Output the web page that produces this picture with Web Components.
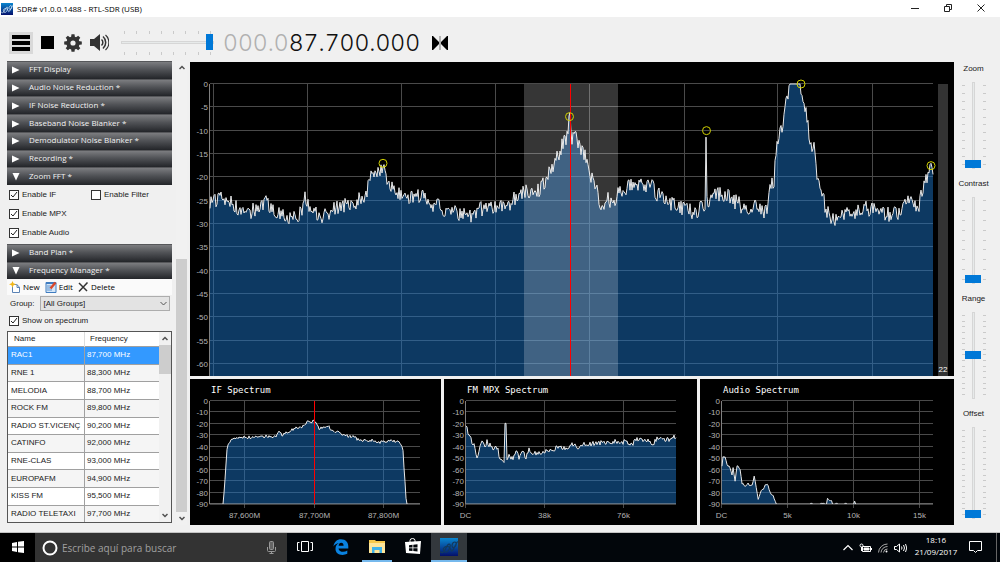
<!DOCTYPE html>
<html lang="es">
<head>
<meta charset="utf-8">
<title>SDR# v1.0.0.1488 - RTL-SDR (USB)</title>
<style>
  html, body {
      height: 100%;
      margin: 0;
  }

  body {
      overflow: hidden;
      background-color: #f0f0f0;
      color: #1a1a1a;
      font-family: 'Liberation Sans', Arial, sans-serif;
      font-size: 8px;
      line-height: 10px;
      --ui-font: 'Open Sans', 'Noto Sans', sans-serif;
      --accent: #0078d7;
  }
</style>
</head>
<body>
<sdr-app></sdr-app>

<script>
/**
 * Shorthand for building a template from a string.
 */
function makeTemplate (html) {
  const template = document.createElement('template')
  template.innerHTML = html
  return template
}

/**
 * Base class, attaches the shadow root and appends the template.
 */
class SdrElement extends HTMLElement {
  constructor () {
    super()
    this.attachShadow({ mode: 'open' })
      .appendChild(this.constructor.template.content.cloneNode(true))
  }

  $ (selector) {
    return this.shadowRoot.querySelector(selector)
  }
}

// The SDR# logo, used in the title bar and in the task bar.
customElements.define('sdr-logo', class extends SdrElement {
  static template = makeTemplate(`
    <style>
    :host { display: block; width: 12px; height: 12px; }
    svg { display: block; width: 100%; height: 100%; }
    </style>
    <svg viewBox="0 0 18 18">
      <defs>
        <linearGradient id="g" x1="0" y1="0" x2="0" y2="1">
          <stop offset="0" stop-color="#0a86cf"/>
          <stop offset="1" stop-color="#04106b"/>
        </linearGradient>
      </defs>
      <rect width="18" height="18" fill="url(#g)"/>
      <path d="M0 13 C2 16 4 15 6 10 C8 5 11 5 10 9 C9 13 6 16 4 13 C2 10 6 7 9 9 C12 11 10 15 13 12 C15 9 17 3 18 4 M12 7 C13 3 17 3 16 7 C15 10 12 11 12 7"
        fill="none" stroke="var(--logo-line, #cfe6f5)" stroke-width="1.2"/>
    </svg>
  `)
})

customElements.define('title-bar', class extends SdrElement {
  static template = makeTemplate(`
    <style>
    :host {
        display: flex;
        align-items: center;
        height: 17px;
        padding: 0 3px 0 1px;
        background-color: #fff;
        color: #000;
        font: 8px/17px var(--ui-font);
    }
    .name { flex: 1; padding-left: 4px; }
    button {
        display: grid;
        place-items: center;
        width: 33px;
        height: 17px;
        padding: 0 0 2px;
        border: 0;
        background: none;
    }
    svg { fill: none; stroke: #222; }
    </style>
    <sdr-logo></sdr-logo>
    <span class="name"><slot></slot></span>
    <button type="button" aria-label="Minimize"><svg width="8" height="8"><path d="M0 4.5h8"/></svg></button>
    <button type="button" aria-label="Restore"><svg width="8" height="8"><path d="M.5 2.5h5v5h-5zM2.5 2V.5h5v5H6"/></svg></button>
    <button type="button" aria-label="Close"><svg width="8" height="8"><path d="M.5.5l7 7M7.5.5l-7 7"/></svg></button>
  `)
})

/**
 * Slider with tick marks on both sides, horizontal or vertical.
 */
customElements.define('tick-slider', class extends SdrElement {
  static template = makeTemplate(`
    <style>
    :host { display: flex; flex-direction: column; width: 93px; }
    .ticks { display: flex; justify-content: space-between; height: 3px; padding: 0 3px; }
    .ticks i { width: 1px; background-color: #cacaca; }
    input {
        appearance: none;
        width: 100%;
        height: 18px;
        margin: 0;
        background: none;
    }
    input::-webkit-slider-runnable-track {
        height: 3px;
        border: 1px solid #d6d6d6;
        box-sizing: border-box;
        background-color: #e7eaea;
    }
    input::-webkit-slider-thumb {
        appearance: none;
        width: 7px;
        height: 16px;
        margin-top: -8px;
        background-color: var(--accent);
    }

    :host([vertical]) {
        flex-direction: row;
        justify-content: center;
        width: auto;
        height: 87px;
    }
    :host([vertical]) .ticks {
        flex-direction: column;
        width: 3px;
        height: auto;
        padding: 3px 0 4px;
    }
    :host([vertical]) .ticks i { width: 3px; height: 1px; }
    :host([vertical]) input {
        writing-mode: vertical-lr;
        direction: rtl;
        width: 18px;
        height: 100%;
    }
    :host([vertical]) input::-webkit-slider-runnable-track { width: 3px; height: 100%; }
    :host([vertical]) input::-webkit-slider-thumb {
        width: 16px;
        height: 8px;
        margin: 0 0 0 -8px;
    }
    </style>
    <div class="ticks"></div>
    <input type="range" min="0" max="100">
    <div class="ticks"></div>
  `)

  connectedCallback () {
    const input = this.$('input')
    input.value = this.getAttribute('value')
    input.setAttribute('aria-label', this.getAttribute('label'))
    this.shadowRoot.querySelectorAll('.ticks').forEach(ticks => {
      ticks.innerHTML = '<i></i>'.repeat(Number(this.getAttribute('ticks')))
    })
  }
})

customElements.define('tool-bar', class extends SdrElement {
  static template = makeTemplate(`
    <style>
    :host { display: flex; align-items: center; box-sizing: border-box; height: 44px; padding: 7px 0 0 9px; }
    button {
        display: grid;
        place-items: center;
        width: 26px;
        height: 22px;
        padding: 0;
        border: 0;
        background: none;
    }
    .menu { width: 24px; background-color: #d9d9d9; }
    .menu + button { margin-left: 1px; }
    tick-slider { margin-left: 9px; }
    .frequency {
        padding-left: 9px;
        color: #111;
        font: 300 23px/24px Inter, sans-serif;
        font-variant-numeric: tabular-nums;
    }
    .frequency span { color: #b0b0b0; }
    .tune { width: 16px; margin-left: 12px; }
    </style>
    <button type="button" class="menu" aria-label="Menu">
      <svg width="18" height="16"><path d="M0 2h18M0 8h18M0 14h18" stroke="#000" stroke-width="4"/></svg>
    </button>
    <button type="button" aria-label="Stop"><svg width="13" height="13"><rect width="13" height="13"/></svg></button>
    <button type="button" aria-label="Settings">
      <svg width="18" height="18" viewBox="-9 -9 18 18" fill="#333">
        <g id="teeth"></g>
        <circle r="4.6" fill="none" stroke="#333" stroke-width="4"/>
      </svg>
    </button>
    <button type="button" aria-label="Mute">
      <svg width="19" height="17" fill="none" stroke="#333">
        <path d="M0 5h4l6-5v17l-6-5H0z" fill="#333" stroke="none"/>
        <path d="M11.500 5.500a4 4 0 0 1 0 6" stroke-width="1.500"/>
        <path d="M13 2.500a8 8 0 0 1 0 12" stroke-width="1.500"/>
        <path d="M15.500 1a10 10 0 0 1 0 15" stroke-width="1.200"/>
      </svg>
    </button>
    <tick-slider label="Volume" ticks="8" value="100"></tick-slider>
    <div class="frequency"><span>000.0</span>87.700.000</div>
    <button type="button" class="tune" aria-label="Tuning style">
      <svg width="16" height="14"><path d="M0 0h1l6 6v2l-6 6H0zM16 0h-1l-6 6v2l6 6h1z"/><path d="M8 0v14" stroke="#777"/></svg>
    </button>
  `)

  connectedCallback () {
    let teeth = ''
    for (let angle = 0; angle < 360; angle += 45) {
      teeth += `<path d="M-2 -5L-1.500 -8.800H1.500L2 -5z" transform="rotate(${angle})"/>`
    }
    this.$('#teeth').innerHTML = teeth
  }
})

// Collapsible header in the side panel.
customElements.define('panel-header', class extends SdrElement {
  static template = makeTemplate(`
    <style>
    :host { display: flex; flex: 1; }
    button {
        display: flex;
        flex: 1;
        align-items: center;
        gap: 9px;
        padding: 0 5px 3px;
        border: 0;
        border-top: 1px solid #56575a;
        background: linear-gradient(#7c7d80, #505256 45%, #232529);
        color: #f2f2f2;
        font: 8px/13px var(--ui-font);
        text-align: left;
    }
    svg { width: 8px; height: 8px; margin-top: 3px; fill: #fff; }
    :host([open]) svg { transform: rotate(90deg); }
    </style>
    <button type="button"><svg viewBox="0 0 8 8"><path d="M0 .5L7.500 4 0 7.500z"/></svg><slot></slot></button>
  `)
})

customElements.define('check-box', class extends SdrElement {
  static template = makeTemplate(`
    <style>
    :host { display: block; }
    label { display: flex; align-items: center; gap: 3px; }
    input {
        appearance: none;
        box-sizing: border-box;
        width: 10px;
        height: 10px;
        margin: 0;
        border: 1px solid #333;
        background-color: #fff;
    }
    .box { display: grid; }
    .box > * { grid-area: 1 / 1; }
    svg { pointer-events: none; fill: none; stroke: #222; }
    input:not(:checked) + svg { visibility: hidden; }
    </style>
    <label>
      <span class="box"><input type="checkbox"><svg width="10" height="10"><path d="M2 5l2 2 4-5"/></svg></span>
      <slot></slot>
    </label>
  `)

  connectedCallback () {
    this.$('input').checked = this.hasAttribute('checked')
  }
})

/**
 * Scroll bar, --before and --after are the free shares round the thumb.
 */
customElements.define('scroll-bar', class extends SdrElement {
  static template = makeTemplate(`
    <style>
    :host { display: flex; flex-direction: column; width: 11px; background-color: #f1f1f1; }
    button { display: grid; place-items: center; height: 13px; padding: 0; border: 0; background: none; }
    svg { fill: none; stroke: #505050; stroke-width: 1.500; }
    .before { flex: var(--before, 0); }
    .thumb { flex: var(--thumb, 1); background-color: #cdcdcd; }
    .after { flex: var(--after, 0); }
    </style>
    <button type="button" aria-label="Up"><svg width="6" height="5"><path d="M.5 4L3 1.500 5.500 4"/></svg></button>
    <div class="before"></div><div class="thumb"></div><div class="after"></div>
    <button type="button" aria-label="Down"><svg width="6" height="5"><path d="M.5 1L3 3.500 5.500 1"/></svg></button>
  `)
})

const stations = [
  ['RAC1', '87,700 MHz'],
  ['RNE 1', '88,300 MHz'],
  ['MELODIA', '88,700 MHz'],
  ['ROCK FM', '89,800 MHz'],
  ['RADIO ST.VICENÇ', '90,200 MHz'],
  ['CATINFO', '92,000 MHz'],
  ['RNE-CLAS', '93,000 MHz'],
  ['EUROPAFM', '94,900 MHz'],
  ['KISS FM', '95,500 MHz'],
  ['RADIO TELETAXI', '97,700 MHz']
]

customElements.define('station-list', class extends SdrElement {
  static template = makeTemplate(`
    <style>
    :host {
        display: flex;
        box-sizing: border-box;
        border: 1px solid #555;
        background-color: #fff;
    }
    table { flex: 1; height: 100%; border-collapse: collapse; table-layout: fixed; }
    th { height: 14px; padding: 0 6px; font-weight: normal; text-align: left; }
    th:first-child { width: 64px; }
    td { padding: 0 3px; border-top: 1px solid #a0a0a0; white-space: nowrap; }
    th + th { padding-left: 5px; border-left: 1px solid #ddd; }
    td + td { padding-left: 2px; border-left: 1px solid #a0a0a0; }
    tbody tr:nth-child(even) { background-color: #f5f5f5; }
    tbody tr:first-child { background-color: #3399ff; color: #fff; }
    scroll-bar { width: 12px; --thumb: 29; --after: 134; }
    </style>
    <table>
      <thead><tr><th>Name</th><th>Frequency</th></tr></thead>
      <tbody></tbody>
    </table>
    <scroll-bar></scroll-bar>
  `)

  connectedCallback () {
    this.$('tbody').innerHTML = stations
      .map(([name, frequency]) => `<tr><td>${name}</td><td>${frequency}</td></tr>`)
      .join('')
  }
})

customElements.define('side-panel', class extends SdrElement {
  static template = makeTemplate(`
    <style>
    :host { display: flex; gap: 4px; padding-left: 7px; }
    .content { display: flex; flex-direction: column; width: 165px; }
    .headers { display: flex; flex-direction: column; height: 124px; }
    .headers.short { height: 35px; }
    .checks {
        display: grid;
        grid-template: repeat(3, 19px) / 82px 1fr;
        align-items: center;
        padding: 0 2px 2px;
    }
    .checks > :nth-child(n + 3) { grid-column: 1; }
    .actions {
        display: flex;
        align-items: center;
        gap: 5px;
        height: 16px;
        padding-left: 2px;
        background-color: #fafafa;
    }
    .actions button {
        display: flex;
        align-items: center;
        gap: 2px;
        padding: 0;
        border: 0;
        background: none;
        color: #000;
        font: 8px/14px var(--ui-font);
    }
    .group { display: flex; align-items: center; gap: 6px; height: 17px; padding: 0 2px 0 3px; }
    .select { display: grid; flex: 1; align-items: center; }
    .select > * { grid-area: 1 / 1; }
    select {
        appearance: none;
        height: 15px;
        padding: 0 2px;
        border: 1px solid #adadad;
        border-radius: 0;
        background-color: #e3e3e3;
        color: inherit;
        font: inherit;
    }
    .select svg { justify-self: end; margin-right: 3px; fill: none; stroke: #555; pointer-events: none; }
    .show { height: 10px; padding: 4px 2px 5px; }
    station-list { flex: 1; margin-bottom: 2px; }
    .outer { --before: 184; --thumb: 252; --after: 0; }
    </style>
    <div class="content">
      <div class="headers">
        <panel-header>FFT Display</panel-header>
        <panel-header>Audio Noise Reduction *</panel-header>
        <panel-header>IF Noise Reduction *</panel-header>
        <panel-header>Baseband Noise Blanker *</panel-header>
        <panel-header>Demodulator Noise Blanker *</panel-header>
        <panel-header>Recording *</panel-header>
        <panel-header open>Zoom FFT *</panel-header>
      </div>
      <div class="checks">
        <check-box checked>Enable IF</check-box>
        <check-box>Enable Filter</check-box>
        <check-box checked>Enable MPX</check-box>
        <check-box checked>Enable Audio</check-box>
      </div>
      <div class="headers short">
        <panel-header>Band Plan *</panel-header>
        <panel-header open>Frequency Manager *</panel-header>
      </div>
      <div class="actions">
        <button type="button">
          <svg width="12" height="12"><path d="M3.500 3.500h4l3 2.500v5.500h-7z" fill="#fff" stroke="#5b83b5"/><path d="M8 3.500v3h3" fill="none" stroke="#5b83b5"/><path d="M3.500 0l1 2.300 2.500 1-2.500 1-1 2.500-1-2.500L0 3.300l2.500-1z" fill="#f2b719"/></svg>
          New
        </button>
        <button type="button">
          <svg width="12" height="12"><path d="M1 1.500h10v10H1z" fill="#d5e6f7" stroke="#3f7cc0"/><path d="M1 2h10" stroke="#3f7cc0" stroke-width="2"/><path d="M2 5h4M2 7h3M2 9h5" stroke="#5b93cf"/><path d="M10.500 1.500l-5 6" stroke="#d9482b" stroke-width="2.500"/></svg>
          Edit
        </button>
        <button type="button">
          <svg width="11" height="10"><path d="M1 1l8 8M9.500.5L1 9.500" fill="none" stroke="#333" stroke-width="1.500"/></svg>
          Delete
        </button>
      </div>
      <div class="group">
        <label for="group">Group:</label>
        <span class="select">
          <select id="group"><option>[All Groups]</option></select>
          <svg width="7" height="5"><path d="M.5 1l3 3 3-3"/></svg>
        </span>
      </div>
      <check-box class="show" checked>Show on spectrum</check-box>
      <station-list></station-list>
    </div>
    <scroll-bar class="outer"></scroll-bar>
  `)
})

/**
 * Settings of each chart. Points are [x, dB] pairs, x counted over span units.
 */
const charts = {
  main: {
    span: 723,
    pad: [20, 22, 0, 21],
    range: 62.6,
    step: 5,
    noise: 3.4,
    grid: [[4], [98], [192], [286], [380], [474.5], [568], [663]],
    band: [314, 408],
    line: 360.5,
    peaks: [[173, -17], [359.5, -7], [496.5, -10], [591, 0], [721, -17.5]],
    level: 22,
    points: [[0, -25], [10, -24.4], [20, -25.3], [30, -26.7], [40, -27.3], [50, -27], [54, -25],
      [60, -26.3], [70, -27.4], [79, -28.5], [86, -29], [92, -27.5], [95, -24.2], [99, -26],
      [106, -28], [112, -28.8], [120, -27.4], [130, -26.5], [139, -25.6], [146, -25.2],
      [154, -23.8], [160, -21.7], [162, -18.5], [166, -19.5], [171, -18.5], [173, -17.3],
      [175, -18.9], [178, -20.5], [183, -22], [189, -23.8], [196, -24.6], [212, -23.8],
      [217, -25.2], [227, -26], [239, -27.8], [244, -26.6], [249, -28], [264, -28.4],
      [270, -26.5], [274, -27.4], [282, -26.3], [290, -25.6], [297, -26], [302, -25],
      [310, -24.2], [315, -22.8], [329, -22.8], [334, -21.3], [339, -18.9], [344, -17.4],
      [349, -15], [352, -13.2], [356, -11.7], [358, -9.2], [360, -7.5], [362, -11.3],
      [366, -11], [369, -13.2], [376, -16], [380, -19.5], [386, -22.4], [390, -25.2],
      [393, -26], [399, -24.4], [402, -25.8], [407, -23.8], [416, -22.4], [430, -21.3],
      [442, -21.7], [446, -24.2], [450, -23.1], [460, -25.6], [467, -26.3], [476, -26.7],
      [486, -28.1], [490, -26.7], [495, -25.6], [496, -10], [497, -25.3], [507, -23.5],
      [517, -23.8], [527, -25.6], [540, -27], [547, -26], [553, -27.8], [558, -26.3],
      [560, -22], [564, -21], [566, -15], [569, -10.3], [573, -9.6], [575, -3.6], [579, -1.4],
      [581, 0], [590, 0], [592, -1.4], [594, -5.3], [598, -7.8], [600, -12.8], [604, -13.7],
      [607, -19.2], [612, -22.4], [616, -27], [623, -29.3], [629, -28.1], [637, -27.7],
      [644, -28.6], [649, -27], [654, -26.5], [667, -27.2], [674, -28.2], [690, -27.5],
      [694, -25.6], [706, -25.6], [709, -26], [712, -22.8], [716, -20.6], [720, -17.8],
      [723, -18.3]]
  },
  if: {
    title: 'IF Spectrum',
    span: 210,
    pad: [20, 22, 21, 21],
    range: 90,
    step: 10,
    noise: 2.8,
    grid: [[35, '87,600M'], [105, '87,700M'], [174, '87,800M']],
    line: 105,
    points: [[13, -90], [14, -81], [16, -55], [17, -43], [19, -35.5], [27, -32], [35, -31.7],
      [47, -31], [57, -31], [64, -32], [69, -27.5], [72, -29.6], [79, -26], [87, -23],
      [94, -21.7], [98, -18], [105, -18], [109, -24], [114, -22.3], [119, -22.9], [122, -26],
      [130, -28], [139, -31.4], [144, -31], [149, -34.6], [154, -34], [164, -34.6],
      [172, -36.4], [180, -34.6], [190, -35.8], [193, -42], [194, -57], [196, -85], [197, -90]]
  },
  mpx: {
    title: 'FM MPX Spectrum',
    span: 210,
    pad: [22, 22, 21, 21],
    range: 90,
    step: 10,
    noise: 4.5,
    grid: [[0, 'DC'], [79, '38k'], [158, '76k']],
    points: [[0, -19.5], [2, -28], [5, -33.5], [8, -38.5], [11, -51.6], [15, -35.6], [17, -35.6],
      [19, -40], [21, -35.6], [23, -40], [24, -35], [26, -41.3], [29, -39.3], [32, -41.3],
      [33, -49.3], [36, -51], [38, -54.5], [39, -20], [40, -20], [41, -49.3], [44, -48.5],
      [47, -51], [50, -43.8], [53, -49], [57, -45], [60, -49], [63, -42], [67, -44.6],
      [72, -45.7], [79, -43.4], [84, -44.3], [92, -40.5], [102, -41], [108, -37.4], [111, -41],
      [116, -40.5], [118, -36], [121, -39], [127, -37.5], [141, -35.8], [154, -35.2],
      [162, -37], [167, -38], [169, -33.5], [181, -33.4], [187, -38], [191, -33], [204, -34],
      [210, -30.5]]
  },
  audio: {
    title: 'Audio Spectrum',
    span: 210,
    pad: [22, 22, 21, 21],
    range: 90,
    step: 10,
    noise: 2,
    grid: [[0, 'DC'], [66, '5k'], [131, '10k'], [197, '15k']],
    points: [[0, -56], [1, -49], [3, -48.7], [5, -56], [7, -56], [10, -65], [11, -59], [13, -70],
      [15, -56], [18, -60], [20, -72], [23, -74.5], [25, -72], [30, -73.6], [32, -65.7],
      [34, -75], [36, -86], [39, -78.6], [45, -72], [48, -80.4], [51, -83.3], [54, -90],
      [88, -90], [89, -89], [90, -90], [98, -90], [99, -89], [100, -90], [101, -89],
      [102, -90], [104, -90], [105, -85], [107, -87], [109, -87], [110, -90], [113, -90],
      [114, -89], [115, -90], [122, -90], [123, -89], [124, -90], [131, -90], [132, -87.5],
      [133, -90]]
  }
}

/**
 * Fills in the trace between the points and adds the receiver's noise.
 */
function makeTrace ({ points, noise, range }) {
  const trace = []
  let seed = 1488
  const [first] = points[0]
  const [last] = points[points.length - 1]
  let i = 0
  for (let x = first; x <= last; x++) {
    while (i < points.length - 2 && points[i + 1][0] <= x) i++
    const [x0, y0] = points[i]
    const [x1, y1] = points[i + 1]
    let db = y0 + (y1 - y0) * (x - x0) / (x1 - x0)
    seed = (seed * 16807) % 2147483647
    // Nothing moves at the floor or on an overloaded peak.
    if (db > -range + 5 && db < -0.5) {
      db += (seed / 2147483647 - 0.5) * noise
    }
    trace.push([x, Math.min(0, Math.max(db, -range))])
  }
  return trace
}

customElements.define('spectrum-chart', class extends SdrElement {
  static template = makeTemplate(`
    <style>
    :host { display: block; min-width: 0; min-height: 0; overflow: hidden; background-color: #000; }
    svg { display: block; width: 100%; height: 100%; font-size: 8px; fill: #b4b4b4; }
    .title { font: 9px 'DejaVu Sans Mono', monospace; fill: #fff; }
    .grid { stroke: #4a4a4a; fill: none; }
    .axis { stroke: #808080; fill: none; }
    .area { fill: rgba(26, 114, 196, .5); }
    .trace { fill: none; stroke: #e8e8e8; }
    .band { fill: rgba(255, 255, 255, .21); }
    .line { stroke: #f00; }
    .peak { fill: none; stroke: #d0d000; }
    .strip { fill: #333; }
    .level { fill: #fff; }
    </style>
    <svg></svg>
  `)

  connectedCallback () {
    this._chart = charts[this.getAttribute('name')]
    this._trace = makeTrace(this._chart)
    new ResizeObserver(() => this._render()).observe(this)
  }

  _render () {
    const chart = this._chart
    const width = this.clientWidth
    const height = this.clientHeight
    const [left, top, bottom, right] = chart.pad
    const end = width - right
    const floor = height - bottom
    const x = value => left + value * (end - left) / chart.span
    const y = db => top - db * (floor - top) / chart.range
    const snap = value => Math.round(value) + 0.5
    let svg = ''

    for (let db = 0; db <= chart.range; db += chart.step) {
      const row = snap(y(-db)) - 1
      svg += `<path class="grid" d="M${left} ${row}H${end}"/>`
      svg += `<text x="${left - 2}" y="${row + 3}" text-anchor="end">${db ? -db : 0}</text>`
    }
    for (const [value, label] of chart.grid) {
      const column = snap(x(value)) - 1
      svg += `<path class="grid" d="M${column} ${top}V${label ? floor + 4 : floor}"/>`
      if (label) {
        svg += `<text x="${column}" y="${floor + 14}" text-anchor="middle">${label}</text>`
      }
    }

    const trace = this._trace.map(([value, db]) => `${x(value).toFixed(1)} ${y(db).toFixed(1)}`)
    const from = x(this._trace[0][0])
    const to = x(this._trace[this._trace.length - 1][0])
    svg += `<path class="area" d="M${from} ${floor}L${trace.join('L')}L${to} ${floor}z"/>`
    svg += `<path class="axis" d="M${left - 0.5} ${top}V${floor}${bottom ? 'H' + end : ''}"/>`

    // Lift the pen while the signal lies on the floor.
    const atFloor = i => this._trace[i][1] <= -chart.range
    const line = trace.map((point, i) => (i && !(atFloor(i) && atFloor(i - 1)) ? 'L' : 'M') + point)
    svg += `<path class="trace" d="${line.join('')}"/>`

    if (chart.band) {
      const [start, stop] = chart.band
      svg += `<rect class="band" x="${x(start)}" y="${top}" width="${x(stop) - x(start)}" height="${floor - top}"/>`
    }
    if (chart.line) {
      svg += `<path class="line" d="M${snap(x(chart.line)) - 1} ${top}V${floor}"/>`
    }
    for (const [value, db] of chart.peaks || []) {
      svg += `<circle class="peak" cx="${x(value)}" cy="${y(db)}" r="4"/>`
    }
    if (chart.level) {
      svg += `<rect class="strip" x="${width - 16}" y="${top}" width="10" height="${floor - top}"/>`
      svg += `<text class="level" x="${width - 11}" y="${height - 4}" text-anchor="middle">${chart.level}</text>`
    }
    if (chart.title) {
      svg += `<text class="title" x="${left + 1}" y="14">${chart.title}</text>`
    }
    this.$('svg').innerHTML = svg
  }
})

customElements.define('level-controls', class extends SdrElement {
  static template = makeTemplate(`
    <style>
    :host {
        display: grid;
        grid-template-rows: repeat(4, 115px);
        align-content: start;
        padding-right: 7px;
        text-align: center;
    }
    div { padding-top: 3px; }
    span { display: block; padding-bottom: 8px; }
    .long { height: 92px; }
    </style>
    <div><span>Zoom</span><tick-slider vertical label="Zoom" ticks="11" value="0"></tick-slider></div>
    <div><span>Contrast</span><tick-slider vertical label="Contrast" ticks="9" value="0"></tick-slider></div>
    <div><span>Range</span><tick-slider vertical label="Range" ticks="15" value="51"></tick-slider></div>
    <div><span>Offset</span><tick-slider class="long" vertical label="Offset" ticks="16" value="0"></tick-slider></div>
  `)
})

customElements.define('task-bar', class extends SdrElement {
  static template = makeTemplate(`
    <style>
    :host {
        display: flex;
        height: 29px;
        background-color: #02060b;
        color: #fff;
        font: 8px/14px var(--ui-font);
    }
    button {
        display: grid;
        place-items: center;
        width: 36px;
        padding: 0;
        border: 0;
        border-bottom: 2px solid transparent;
        background: none;
        color: inherit;
        font: inherit;
    }
    svg { fill: none; stroke: #fff; }
    .start { width: 35px; background-color: #000; }
    .search {
        display: flex;
        align-items: center;
        box-sizing: border-box;
        gap: 4px;
        width: 252px;
        padding: 0 11px 0 7px;
        background-color: #333;
    }
    input {
        flex: 1;
        min-width: 0;
        padding: 0;
        border: 0;
        background: none;
        color: #fff;
        font: 10px/20px var(--ui-font);
    }
    input::placeholder { color: #a0a0a0; }
    .open { width: 30px; margin: 0 3px; border-color: #76b9ed; }
    .active { width: 36px; margin: 0; background-color: #33383d; }
    sdr-logo { width: 18px; height: 18px; --logo-line: #123a5e; }
    .tray { display: flex; align-items: center; gap: 6px; margin-left: auto; }
    .tray button { width: auto; border: 0; }
    .tray .clock { width: 46px; padding-bottom: 4px; line-height: 12px; }
    .tray .notes { margin: 0 8px 0 4px; }
    .desktop { align-self: stretch; width: 3px; border-left: 1px solid #666; }
    </style>
    <button type="button" class="start" aria-label="Inicio">
      <svg width="12" height="12"><path d="M0 2l5-1v4.500H0zM6 .8L12 0v5.500H6zM0 6.500h5V11l-5-1zM6 6.500h6V12l-6-.8z" fill="#fff" stroke="none"/></svg>
    </button>
    <div class="search">
      <svg width="16" height="16"><circle cx="8" cy="8" r="6.500" stroke-width="2"/></svg>
      <input type="text" aria-label="Buscar" placeholder="Escribe aquí para buscar">
      <svg width="9" height="13" stroke="#aaa"><rect x="2.500" y=".5" width="4" height="8" rx="1" fill="#666" stroke="#999"/><path d="M.5 6v3.500q0 1 1 1h6q1 0 1-1V6M4.500 10.500v2M2.500 12.500h4" stroke="#999"/></svg>
    </div>
    <button type="button" aria-label="Vista de tareas">
      <svg width="16" height="13"><path d="M4.500 1.500h7v10h-7zM2.500 2.500h-2v8h2M13.500 2.500h2v8h-2"/></svg>
    </button>
    <button type="button" aria-label="Edge">
      <svg width="16" height="16"><path d="M.5 7.500C1 3 4 .3 8 .3c5 0 7.300 3.500 7.300 7.200v2H5.500c.2 2.500 2.500 3.300 4.500 3.300 1.600 0 3-.4 4.300-1.200v3.200c-1.500.8-3.100 1.100-4.800 1.100-4.300 0-7-2.300-7-6.200 0-2.500 1.300-4.500 3.300-5.600C3.500 4.600 1.800 5.500.5 7.500zM5.600 6.700h5C10.600 4.800 9.700 3.700 8.200 3.700S5.800 5 5.600 6.700z" fill="#0a82e0" fill-rule="evenodd" stroke="none"/></svg>
    </button>
    <button type="button" class="open" aria-label="Explorador">
      <svg width="16" height="13"><path d="M0 0h6l1 1h9v12H0z" fill="#f6c84c" stroke="none"/><path d="M0 3h16v10H0z" fill="#fde59a" stroke="none"/><path d="M3 13V7h10v6h-2.500v-3h-5v3z" fill="#3fb2ea" stroke="none"/></svg>
    </button>
    <button type="button" aria-label="Tienda">
      <svg width="16" height="17"><path d="M0 4l16-1-1 13-14-1z" fill="#fff" stroke="none"/><path d="M5 4V2.500q0-2 2.500-2t2.500 2V4"/><path d="M4 7.200l3.500-.4v2.700H4zM8.300 6.700l4.200-.4v3.200H8.300zM4 10.300h3.500V13L4 12.700zM8.300 10.300h4.200v3.200l-4.200-.4z" fill="#02060b" stroke="none"/></svg>
    </button>
    <button type="button" class="open active" aria-label="SDR#"><sdr-logo></sdr-logo></button>
    <div class="tray">
      <button type="button" aria-label="Iconos ocultos"><svg width="10" height="7"><path d="M.5 6L5 1.500 9.500 6" stroke-width="1.200"/></svg></button>
      <button type="button" aria-label="Batería"><svg width="13" height="10"><path d="M3.500 3.500h8v5h-8z"/><path d="M5 5h5v2H5z" fill="#fff"/><path d="M12.500 5v2"/><circle cx="2.500" cy="2.500" r="1.500" fill="#02060b"/><path d="M2.500 4v4"/></svg></button>
      <button type="button" aria-label="Red"><svg width="10" height="10" stroke="#aaa"><path d="M.5 9.500A9 9 0 0 1 9.500 1M3 9.500A6.500 6.500 0 0 1 9.500 3.500M5.500 9.500A4 4 0 0 1 9.500 6" stroke="#aaa"/><circle cx="8.500" cy="8.500" r="1" fill="#fff" stroke="none"/></svg></button>
      <button type="button" aria-label="Volumen"><svg width="13" height="10"><path d="M.5 3.500h2l3-2.500v8l-3-2.500h-2zM7.500 3.500q1 1.500 0 3M9.500 2q2 3 0 6M11.500 1q2.500 4 0 8"/></svg></button>
      <button type="button" class="clock"><time>18:16</time><time>21/09/2017</time></button>
      <button type="button" class="notes" aria-label="Notificaciones"><svg width="13" height="13"><path d="M.5.5h12v9H8.500l-2 2-2-2h-4z"/></svg></button>
      <div class="desktop"></div>
    </div>
  `)
})

/**
 * The whole desktop: the receiver's window and the task bar.
 */
customElements.define('sdr-app', class extends SdrElement {
  static template = makeTemplate(`
    <style>
    :host { display: flex; flex-direction: column; height: 100vh; }
    main {
        display: grid;
        flex: 1;
        grid-template-columns: 190px 1fr 46px;
        min-height: 0;
        box-sizing: border-box;
        padding-bottom: 7px;
        border-bottom: 1px solid #c4c4c4;
    }
    .charts {
        display: grid;
        grid-template: 1fr 146px / 251fr 253fr 254fr;
        gap: 3px;
        padding-top: 1px;
    }
    .wide { grid-column: 1 / -1; }
    </style>
    <title-bar>SDR# v1.0.0.1488 - RTL-SDR (USB)</title-bar>
    <tool-bar></tool-bar>
    <main>
      <side-panel></side-panel>
      <div class="charts">
        <spectrum-chart class="wide" name="main"></spectrum-chart>
        <spectrum-chart name="if"></spectrum-chart>
        <spectrum-chart name="mpx"></spectrum-chart>
        <spectrum-chart name="audio"></spectrum-chart>
      </div>
      <level-controls></level-controls>
    </main>
    <task-bar></task-bar>
  `)
})
</script>
</body>
</html>
